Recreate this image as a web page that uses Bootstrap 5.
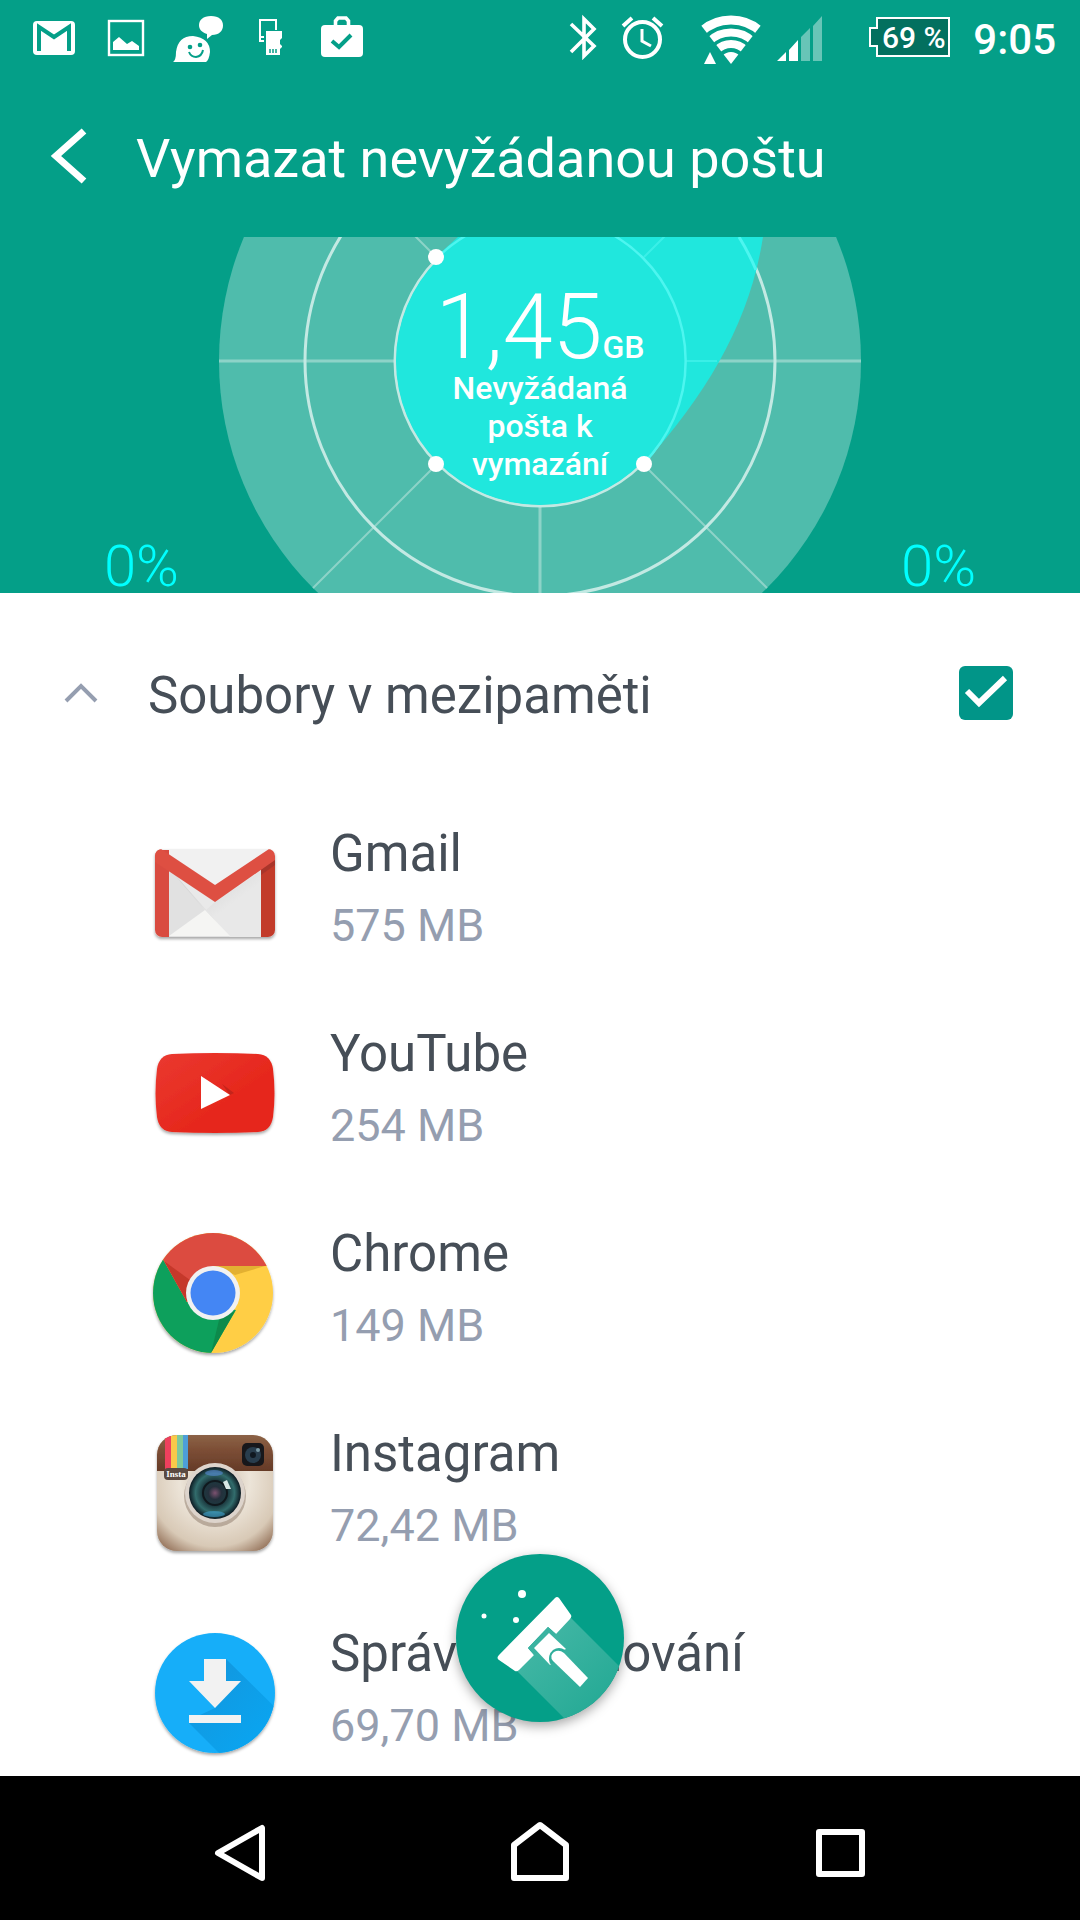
<!DOCTYPE html>
<html lang="cs">
<head>
<meta charset="utf-8">
<meta name="viewport" content="width=device-width, initial-scale=1">
<title>Vymazat nevyžádanou poštu</title>
<link href="https://cdn.jsdelivr.net/npm/bootstrap@5.3.0/dist/css/bootstrap.min.css" rel="stylesheet">
<style>
  :root { --teal: #049f88; --cyan: #00ffff; --ink: #464e57; --muted: #959eb0; }
  body { font-family: Roboto, "Noto Sans", sans-serif; color: var(--ink); background: #fff; }
  svg { display: block; flex: none; overflow: visible; }
  .teal-area { background: var(--teal); color: #fff; }
  .status-bar { height: 75px; padding: 0 24px 0 18px; }
  .status-time { font-size: 42px; line-height: 48px; font-weight: 500; padding: 4px 0 0 20px; }
  .battery-label { font: 500 30px Roboto, sans-serif; fill: #fff; }
  .title-bar { height: 162px; padding-left: 50px; gap: 50px; }
  .title-bar h1 { font-size: 54px; line-height: 64px; font-weight: 400; padding-top: 5px; }
  .side-share { font-size: 58px; line-height: 54px; font-weight: 300; color: var(--cyan); padding: 0 40px; }
  .radar { height: 356px; }
  .radar svg { overflow: hidden; }
  .radar-total { padding-top: 50px; }
  .total-size { font-size: 90px; line-height: 82px; font-weight: 300; }
  .total-unit, .total-note { font-size: 32px; line-height: 38px; font-weight: 500; }
  .total-note { width: 178px; }
  .cache-list { scrollbar-width: none; }
  .group-head { height: 200px; padding: 0 67px 0 65px; gap: 51px; }
  .group-head label, .app-name { font-size: 51px; }
  .group-head label { line-height: 60px; padding-top: 5px; }
  .group-toggle:focus-visible { outline: 2px solid var(--teal); }
  .group-head .form-check-input { width: 54px; height: 54px; border: 0; border-radius: 6px; }
  .group-head .form-check-input:checked {
    background-color: #019588; background-size: 54px 54px;
    background-image: url("data:image/svg+xml,%3Csvg xmlns='http://www.w3.org/2000/svg' viewBox='0 0 54 54'%3E%3Cpath fill='none' stroke='%23fff' stroke-width='6' d='M8 25L20 37L46 12'/%3E%3C/svg%3E");
  }
  .app-row { height: 200px; padding-left: 155px; gap: 55px; }
  .app-text { padding-bottom: 6px; }
  .app-name, .app-size { line-height: 72px; }
  .app-size { font-size: 45px; color: var(--muted); }
  .clean-btn { width: 168px; height: 168px; bottom: 54px; background: var(--teal); box-shadow: 0 4px 12px rgba(0,0,0,.35); }
  .nav-keys { height: 144px; background: #000; }
</style>
</head>
<body>
<div class="vh-100 d-flex flex-column overflow-hidden">

  <header class="teal-area flex-shrink-0">
    <div class="status-bar d-flex justify-content-between align-items-center">
      <div class="d-flex">
        <svg width="72" height="75" viewBox="18 0 72 75" aria-hidden="true"><rect x="33" y="21" width="42" height="34" rx="4" fill="#fff"/><path d="M39 51V27L54 37L69 27V51" fill="none" stroke="#049f88" stroke-width="4"/></svg>
        <svg width="72" height="75" viewBox="90 0 72 75" aria-hidden="true"><rect x="109" y="21" width="34" height="34" fill="none" stroke="#fff" stroke-width="2.4"/><path d="M113 50V42L119 37L127 44L132 41L139 46V50Z" fill="#fff"/></svg>
        <svg width="72" height="75" viewBox="162 0 72 75" aria-hidden="true"><path d="M173 62Q176 60 176 52Q178 36 193 36Q210 38 210 52Q209 60 206 62Z" fill="#fff"/><path d="M211 16C219 16 223 20 223 25.500S219 35 212 35L207 39V34C201 32 199 29 199 25C199 20 203 16 211 16Z" fill="#fff"/><circle cx="190" cy="47" r="2.300" fill="#049f88"/><circle cx="200" cy="45" r="2.300" fill="#049f88"/><path d="M189 52Q191 57 196 57Q202 56 203 50" fill="none" stroke="#049f88" stroke-width="2"/></svg>
        <svg width="72" height="75" viewBox="234 0 72 75" aria-hidden="true"><path d="M276 30V20H260V41H264M260 37H264" fill="none" stroke="#fff" stroke-width="2"/><path d="M266 31H282V38L280 40V44L282 46V47L280 49V55H266Z" fill="#fff"/><path d="M270 49V53M273 49V53M276 49V53" stroke="#049f88" stroke-width="1.500"/></svg>
        <svg width="72" height="75" viewBox="306 0 72 75" aria-hidden="true"><rect x="321" y="25" width="42" height="32" rx="4" fill="#fff"/><path d="M335.500 27V21L338 18H346L348.500 21V27" fill="none" stroke="#fff" stroke-width="3.600"/><path d="M332 41L339 47L351 35" fill="none" stroke="#049f88" stroke-width="4"/></svg>
      </div>
      <div class="d-flex align-items-center">
        <svg width="60" height="75" viewBox="553 0 60 75" aria-hidden="true"><path d="M571 24L594 46L584 56V19L594 29L571 52" fill="none" stroke="#fff" stroke-width="3.600"/></svg>
        <svg width="60" height="75" viewBox="613 0 60 75" aria-hidden="true"><g fill="none" stroke="#fff" stroke-width="4"><circle cx="642.500" cy="39.500" r="17.500"/><path d="M642 29V41L651 46" stroke-width="3"/><path d="M623 26L632 18M662 26L653 18"/></g></svg>
        <svg width="100" height="75" viewBox="673 0 100 75" aria-hidden="true"><clipPath id="fan"><path d="M731 64L700 24V10H762V24Z"/></clipPath><g clip-path="url(#fan)" fill="none" stroke="#fff"><circle cx="731" cy="64" r="44" stroke-width="9"/><circle cx="731" cy="64" r="31.500" stroke-width="8"/><circle cx="731" cy="64" r="20" stroke-width="8"/><circle cx="731" cy="64" r="6" stroke-width="12"/></g><path d="M704 64L710 52L716 64Z" fill="#fff"/></svg>
        <svg width="90" height="75" viewBox="773 0 90 75" aria-hidden="true"><path d="M777 61L786 52V61ZM789 61V50L798 40V61Z" fill="#fff"/><path d="M801 61V37L810 28V61ZM813 61V26L822 16V61Z" fill="#fff" opacity=".4"/></svg>
        <svg width="90" height="75" viewBox="863 0 90 75" role="img" aria-label="Baterie 69 %"><path d="M877 18H949V56H877V46H870V28H877Z" fill="#03705f" stroke="#fff" stroke-width="2"/><text class="battery-label" x="882" y="48">69 %</text></svg>
        <div class="status-time">9:05</div>
      </div>
    </div>

    <div class="title-bar d-flex align-items-center">
      <a href="#" aria-label="Zpět"><svg width="36" height="56" viewBox="0 0 36 56"><path d="M34 3L6 28L34 53" fill="none" stroke="#fff" stroke-width="7"/></svg></a>
      <h1 class="m-0">Vymazat nevyžádanou poštu</h1>
    </div>

    <div class="d-flex align-items-end">
      <div class="side-share flex-fill text-end">0%</div>
      <div class="radar position-relative">
        <svg width="642" height="356" viewBox="219 237 642 356" aria-hidden="true">
          <circle cx="540" cy="361" r="321" fill="#4fbcac"/>
          <g stroke="#8dd3c8" fill="none"><path d="M219 361H394M686 361H861M540 507V593" stroke-width="3"/><path d="M436 465L313 588M644 465L767 588M436 257L410 231M644 257L670 231" stroke-width="2"/></g>
          <g stroke="#c3e9e3" stroke-width="3" fill="none"><circle cx="540" cy="361" r="235"/><circle cx="540" cy="361" r="145"/></g>
          <path d="M436 257L458 237H763C750 320 710 390 644 464Z" fill="#20e7dd"/>
          <circle cx="540" cy="361" r="144" fill="#20e7dd"/>
          <g fill="none" stroke="#4df5ef"><path d="M437 258A145 145 0 1 1 643 464" stroke-width="2.500"/><path d="M739 237A235 235 0 0 1 756 270" stroke-width="3"/><path d="M644 257L670 231M686 361H717" stroke-width="2" opacity=".6"/></g>
          <g fill="#fff"><circle cx="436" cy="257" r="8"/><circle cx="436" cy="464" r="8"/><circle cx="644" cy="464" r="8"/></g>
        </svg>
        <div class="radar-total position-absolute top-0 start-0 w-100 d-flex flex-column align-items-center text-center">
          <div class="d-flex align-items-baseline"><span class="total-size">1,45</span><span class="total-unit">GB</span></div>
          <div class="total-note">Nevyžádaná pošta k vymazání</div>
        </div>
      </div>
      <div class="side-share flex-fill">0%</div>
    </div>
  </header>

  <div class="position-relative flex-fill overflow-hidden d-flex flex-column">
    <main class="cache-list flex-fill overflow-auto">
      <div class="group-head d-flex align-items-center">
        <button type="button" class="group-toggle btn p-0 border-0" aria-label="Sbalit"><svg width="32" height="18" viewBox="0 0 32 18"><path d="M1 17L16 2L31 17" fill="none" stroke="#959eb0" stroke-width="4"/></svg></button>
        <label for="cacheAll" class="flex-fill">Soubory v mezipaměti</label>
        <input class="form-check-input m-0" type="checkbox" id="cacheAll" checked>
      </div>

      <ul class="list-unstyled m-0">
        <li class="app-row d-flex align-items-center">
          <svg width="120" height="120" viewBox="155 833 120 120" aria-hidden="true">
            <defs><linearGradient id="gm" x1="0" y1="0" x2="1" y2="1"><stop offset="0" stop-color="#c8c8c8"/><stop offset=".6" stop-color="#e8e8e8"/></linearGradient><clipPath id="gmc"><rect x="155" y="849" width="120" height="88" rx="7"/></clipPath><filter id="soft" x="-10%" y="-10%" width="120%" height="130%"><feDropShadow dx="0" dy="2" stdDeviation="1.500" flood-opacity=".35"/></filter></defs>
            <g filter="url(#soft)"><g clip-path="url(#gmc)"><rect x="155" y="849" width="120" height="88" fill="#e9e9e9"/><path d="M169 868L230 937H169Z" fill="#e1e1e1"/><path d="M169 868L205 911L215 902L262 870V937H230Z" fill="url(#gm)"/><path d="M169 936L205 910L230 936Z" fill="#f5f5f3"/><path d="M161 849H269L215 885Z" fill="#f1f1f1"/><path d="M155 850H169V937H155Z" fill="#d94c40"/><path d="M261 862H275V937H261Z" fill="#c23a2c"/><path d="M261 869L275 858V865L261 875Z" fill="#a9352b"/><path d="M155 849H161L215 885L269 849H275V860L215 902L155 862Z" fill="#de4f43"/></g></g>
          </svg>
          <div class="app-text"><div class="app-name">Gmail</div><div class="app-size">575 MB</div></div>
        </li>
        <li class="app-row d-flex align-items-center">
          <svg width="120" height="120" viewBox="155 1033 120 120" aria-hidden="true">
            <defs><linearGradient id="yt" x1="0" y1="0" x2="1" y2="1"><stop offset="0" stop-color="#ea3930"/><stop offset=".6" stop-color="#e6281d"/></linearGradient></defs>
            <path filter="url(#soft)" fill="url(#yt)" d="M172 1054Q215 1052 258 1054Q271 1055 273 1069Q276 1093 273 1117Q271 1131 258 1132Q215 1134 172 1132Q159 1131 157 1117Q154 1093 157 1069Q159 1055 172 1054Z"/><path d="M222 1084L234 1093L230 1095Z" fill="#c4241b"/><path d="M201 1076L230 1095L201 1109Z" fill="#fff"/>
          </svg>
          <div class="app-text"><div class="app-name">YouTube</div><div class="app-size">254 MB</div></div>
        </li>
        <li class="app-row d-flex align-items-center">
          <svg width="120" height="120" viewBox="155 1233 120 120" aria-hidden="true">
            <defs><clipPath id="crc"><circle cx="213" cy="1293" r="60"/></clipPath></defs>
            <g filter="url(#soft)"><g clip-path="url(#crc)">
              <rect x="153" y="1233" width="120" height="120" fill="#ffce44"/>
              <path d="M140 1220L164 1261L187 1302L236 1310L211 1353L205 1365H140Z" fill="#10a05b"/>
              <path d="M140 1220H290V1266H213L187 1302L164 1261Z" fill="#dc4c3f"/>
              <path d="M164 1261L187 1302L190 1280Z" fill="#c5372c"/><path d="M215 1266H265L235 1275Z" fill="#e3b030"/><path d="M235 1311L211 1353L219 1320Z" fill="#0d8a4c"/>
            </g></g>
            <circle cx="213" cy="1293" r="27" fill="#f1f1f1"/><circle cx="213" cy="1293" r="22.500" fill="#4486f4"/>
          </svg>
          <div class="app-text"><div class="app-name">Chrome</div><div class="app-size">149 MB</div></div>
        </li>
        <li class="app-row d-flex align-items-center">
          <svg width="120" height="120" viewBox="155 1433 120 120" aria-hidden="true">
            <defs><clipPath id="igc"><rect x="157" y="1435" width="116" height="116" rx="20"/></clipPath>
            <radialGradient id="igb" cx=".5" cy=".4" r=".75"><stop offset="0" stop-color="#c9b8a4"/><stop offset=".4" stop-color="#ece4d8"/><stop offset=".75" stop-color="#d8c9b6"/><stop offset="1" stop-color="#8a654c"/></radialGradient>
            <linearGradient id="igt" x1="0" y1="0" x2="0" y2="1"><stop offset="0" stop-color="#8c6347"/><stop offset=".4" stop-color="#7d4f36"/><stop offset="1" stop-color="#653a27"/></linearGradient>
            <radialGradient id="lens"><stop offset="0" stop-color="#7c5270"/><stop offset=".25" stop-color="#24303c"/><stop offset=".5" stop-color="#1c3a40"/><stop offset=".75" stop-color="#326c6c"/><stop offset="1" stop-color="#0d1a22"/></radialGradient></defs>
            <g filter="url(#soft)"><g clip-path="url(#igc)"><rect x="157" y="1435" width="116" height="116" fill="url(#igb)"/><rect x="157" y="1435" width="116" height="36" fill="url(#igt)"/><path d="M165 1435h6v34h-6z" fill="#ee3f5d"/><path d="M171 1435h6v34h-6z" fill="#f9c94a"/><path d="M177 1435h6v34h-6z" fill="#7fc99a"/><path d="M183 1435h5v34h-5z" fill="#4e9ed8"/></g></g>
            <rect x="164" y="1468" width="24" height="12" rx="4" fill="#5b4a41"/><text x="176" y="1477" text-anchor="middle" font-family="Liberation Serif, serif" font-weight="700" font-size="9" fill="#fff">Insta</text>
            <rect x="242" y="1443" width="22" height="23" rx="5" fill="#17171b"/><circle cx="253" cy="1455" r="8" fill="#293d4d"/><circle cx="253" cy="1455" r="3" fill="#101820"/><circle cx="258" cy="1450" r="2" fill="#7a9aa6"/>
            <circle cx="215" cy="1496" r="31" fill="#8c7868" opacity=".5"/><circle cx="215" cy="1493" r="30" fill="#ddd4cc"/><circle cx="215" cy="1493" r="26" fill="url(#lens)"/><circle cx="215" cy="1493" r="12" fill="none" stroke="#10181d" stroke-width="2"/><ellipse cx="214" cy="1473" rx="9" ry="3" fill="#5688d6" opacity=".6"/><ellipse cx="214" cy="1514" rx="11" ry="3" fill="#3fa1d0" opacity=".6"/><path d="M223 1482L227 1480L231 1489L226 1489Z" fill="#d8e8e6"/>
          </svg>
          <div class="app-text"><div class="app-name">Instagram</div><div class="app-size">72,42 MB</div></div>
        </li>
        <li class="app-row d-flex align-items-center">
          <svg width="120" height="120" viewBox="155 1633 120 120" aria-hidden="true">
            <defs><clipPath id="dlc"><circle cx="215" cy="1693" r="60"/></clipPath><linearGradient id="dlr" x1="0" y1="0" x2="1" y2="1"><stop offset="0" stop-color="#1494db"/><stop offset="1" stop-color="#06abf8"/></linearGradient></defs>
            <circle filter="url(#soft)" cx="215" cy="1693" r="60" fill="#14aef9"/>
            <g clip-path="url(#dlc)"><path d="M226 1659L290 1722V1770H236L189 1723V1715H200L215 1708L226 1681Z" fill="url(#dlr)"/></g>
            <path d="M204 1659H226V1681H241L215 1708L189 1681H204ZM189 1715H241V1723H189Z" fill="#f2f2f2"/>
          </svg>
          <div class="app-text"><div class="app-name">Správce stahování</div><div class="app-size">69,70 MB</div></div>
        </li>
      </ul>
    </main>

    <button type="button" class="clean-btn btn p-0 border-0 rounded-circle position-absolute start-50 translate-middle-x" aria-label="Vymazat">
      <svg width="168" height="168" viewBox="456 1554 168 168">
        <defs><clipPath id="fab"><circle cx="540" cy="1638" r="84"/></clipPath><linearGradient id="ray" x1="0" y1="0" x2="1" y2="1"><stop offset="0" stop-color="#49b9a8"/><stop offset="1" stop-color="#17a48e"/></linearGradient></defs>
        <path clip-path="url(#fab)" d="M571 1618L640 1687V1740H586L517 1671L540 1640Z" fill="url(#ray)"/>
        <path d="M555 1598Q557 1596 559 1598L571 1615Q572 1617 570 1619L556 1634L548 1627L528 1648L534 1655L519 1670Q517 1672 515 1671L499 1660Q496 1658 499 1655Z" fill="#fff"/>
        <path d="M548 1627L556 1634L534 1655L528 1648Z" fill="#3bb3a1"/>
        <path d="M549 1633L566 1649L564 1650H558L549 1658L551 1664L550 1665L534 1648Z" fill="#fff"/>
        <path d="M550 1664Q547 1655 553 1650Q559 1646 565 1650L560 1660Z" fill="#30ae9b"/>
        <path d="M553 1661Q549 1656 554 1652Q559 1649 564 1653L588 1678L580 1687Z" fill="#fff"/>
        <g fill="#fff"><circle cx="522" cy="1594" r="4"/><circle cx="484" cy="1616" r="2.500"/><circle cx="516" cy="1620" r="3"/></g>
      </svg>
    </button>
  </div>

  <nav class="nav-keys flex-shrink-0 d-flex justify-content-center" aria-label="Systém">
    <button type="button" class="btn p-0 border-0" aria-label="Zpět"><svg width="300" height="144" viewBox="90 1776 300 144"><path d="M262 1828V1878L218 1853Z" fill="none" stroke="#fff" stroke-width="6" stroke-linejoin="round"/></svg></button>
    <button type="button" class="btn p-0 border-0" aria-label="Domů"><svg width="300" height="144" viewBox="390 1776 300 144"><path d="M514 1878V1845L540 1825L566 1845V1878Z" fill="none" stroke="#fff" stroke-width="6" stroke-linejoin="round"/></svg></button>
    <button type="button" class="btn p-0 border-0" aria-label="Poslední aplikace"><svg width="300" height="144" viewBox="690 1776 300 144"><rect x="819" y="1832" width="43" height="42" fill="none" stroke="#fff" stroke-width="6" stroke-linejoin="round"/></svg></button>
  </nav>
</div>
<script src="https://cdn.jsdelivr.net/npm/bootstrap@5.3.0/dist/js/bootstrap.bundle.min.js"></script>
</body>
</html>
